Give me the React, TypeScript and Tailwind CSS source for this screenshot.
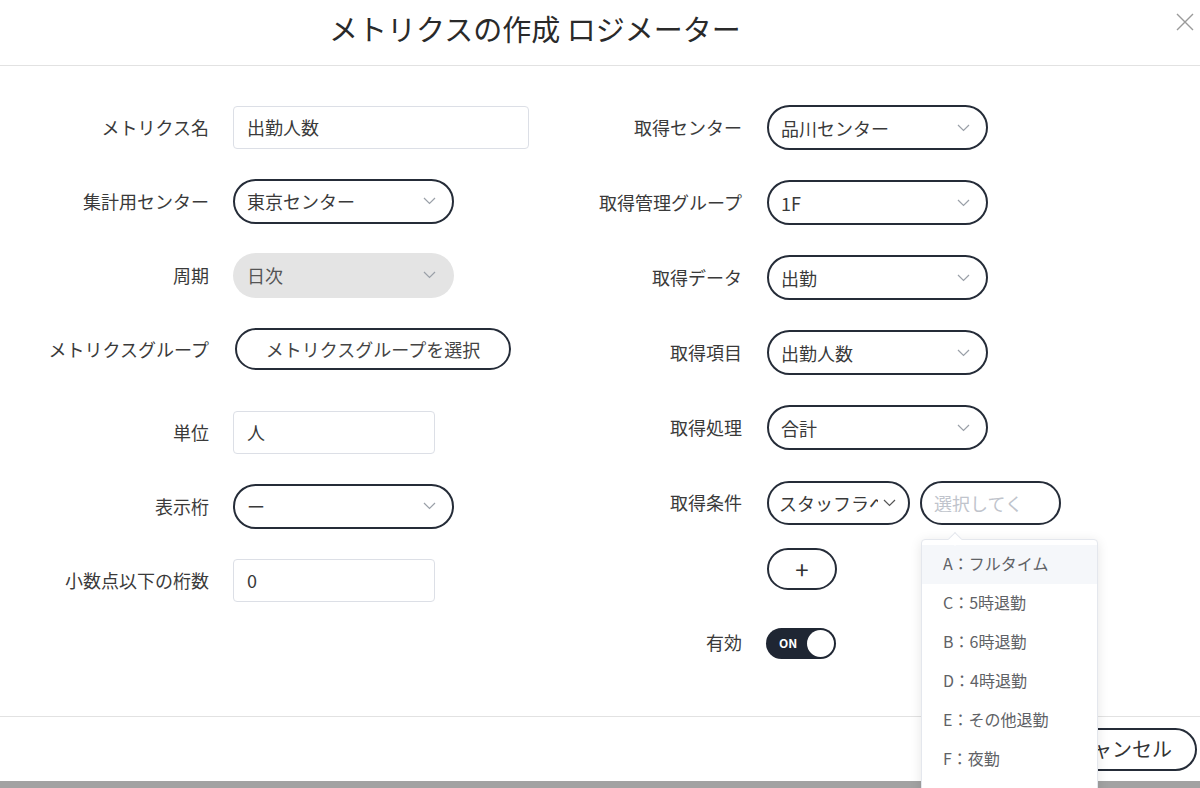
import React from "react";

const Chevron = ({ color = "#9aa0a8" }: { color?: string }) => (
  <svg width="13" height="8" viewBox="0 0 13 8" className="shrink-0">
    <polyline points="1,1 6.5,6.5 12,1" fill="none" stroke={color} strokeWidth="1.2" />
  </svg>
);

function Select({ value, width = "w-[221px]" }: { value: string; width?: string }) {
  return (
    <div
      className={`${width} h-[45px] rounded-full border-2 border-[#252c38] flex items-center pl-[12px] pr-[16px] bg-white`}
    >
      <span className="flex-1 text-[18px] text-[#3a3a3a] leading-none">{value}</span>
      <Chevron />
    </div>
  );
}

function TextInput({ value, width }: { value: string; width: string }) {
  return (
    <div
      className={`${width} h-[43px] rounded-[4px] border border-[#dcdfe6] flex items-center px-[13px] text-[18px] text-[#3a3a3a] leading-none`}
    >
      {value}
    </div>
  );
}

function LeftRow({
  label,
  children,
  extra = "",
}: {
  label: string;
  children: React.ReactNode;
  extra?: string;
}) {
  return (
    <div className={`h-[74px] flex items-center ${extra}`}>
      <div className="w-[209px] text-right text-[18px] text-[#3a3a3a] leading-none">{label}</div>
      <div className="ml-[24px]">{children}</div>
    </div>
  );
}

function RightRow({
  label,
  children,
  height = "h-[75px]",
}: {
  label: string;
  children: React.ReactNode;
  height?: string;
}) {
  return (
    <div className={`${height} flex items-center`}>
      <div className="w-[182px] text-right text-[18px] text-[#3a3a3a] leading-none -mt-[2px]">{label}</div>
      <div className="ml-[25px] flex items-center">{children}</div>
    </div>
  );
}

const options = [
  "A：フルタイム",
  "C：5時退勤",
  "B：6時退勤",
  "D：4時退勤",
  "E：その他退勤",
  "F：夜勤",
];

export default function App() {
  return (
    <div className="relative w-[1200px] h-[788px] overflow-hidden bg-white font-[family-name:'Noto_Sans_CJK_JP','Noto_Sans',sans-serif]">
      {/* header */}
      <div className="h-[66px] border-b border-[#e2e2e2] flex items-start">
        <h1 className="ml-[329px] mt-[10px] text-[29px] leading-[36px] text-[#2a2a2a] font-normal">
          メトリクスの作成 ロジメーター
        </h1>
        <button className="ml-auto mr-[6px] mt-[13px] w-[18px] h-[18px]" aria-label="close">
          <svg width="18" height="18" viewBox="0 0 18 18">
            <path d="M1 1 L17 17 M17 1 L1 17" stroke="#9a9a9a" strokeWidth="1.4" />
          </svg>
        </button>
      </div>

      {/* body */}
      <div className="h-[650px] flex">
        <div className="w-[560px] pt-[24px]">
          <LeftRow label="メトリクス名">
            <TextInput value="出勤人数" width="w-[296px]" />
          </LeftRow>
          <LeftRow label="集計用センター">
            <Select value="東京センター" />
          </LeftRow>
          <LeftRow label="周期">
            <div className="w-[221px] h-[45px] rounded-full bg-[#e4e4e4] flex items-center pl-[14px] pr-[18px]">
              <span className="flex-1 text-[18px] text-[#555] leading-none">日次</span>
              <Chevron />
            </div>
          </LeftRow>
          <LeftRow label="メトリクスグループ">
            <button className="ml-[2px] w-[276px] h-[42px] rounded-full border-2 border-[#252c38] text-[18px] text-[#444] leading-none">
              メトリクスグループを選択
            </button>
          </LeftRow>
          <LeftRow label="単位" extra="mt-[9px]">
            <TextInput value="人" width="w-[202px]" />
          </LeftRow>
          <LeftRow label="表示桁">
            <Select value="ー" />
          </LeftRow>
          <LeftRow label="小数点以下の桁数">
            <TextInput value="0" width="w-[202px]" />
          </LeftRow>
        </div>

        <div className="flex-1 pt-[24px]">
          <RightRow label="取得センター">
            <Select value="品川センター" width="w-[221px]" />
          </RightRow>
          <RightRow label="取得管理グループ">
            <Select value="1F" width="w-[221px]" />
          </RightRow>
          <RightRow label="取得データ">
            <Select value="出勤" width="w-[221px]" />
          </RightRow>
          <RightRow label="取得項目">
            <Select value="出勤人数" width="w-[221px]" />
          </RightRow>
          <RightRow label="取得処理">
            <Select value="合計" width="w-[221px]" />
          </RightRow>
          <RightRow label="取得条件">
            <div className="w-[143px] h-[44px] rounded-full border-2 border-[#252c38] flex items-center pl-[10px] pr-[12px]">
              <span className="w-[100px] overflow-hidden whitespace-nowrap text-[18px] text-[#3a3a3a] leading-none">
                スタッフラベル
              </span>
              <span className="ml-[5px]">
                <Chevron color="#555" />
              </span>
            </div>
            <div className="ml-[10px] w-[141px] h-[44px] rounded-full border-2 border-[#252c38] flex items-center pl-[12px] pr-[36px]">
              <span className="overflow-hidden whitespace-nowrap text-[18px] text-[#c0c4cc] leading-none">
                選択してください
              </span>
            </div>
          </RightRow>
          <RightRow label="" height="h-[58px]">
            <button className="w-[70px] h-[42px] rounded-full border-2 border-[#252c38] text-[24px] text-[#333] leading-none flex items-center justify-center">
              +
            </button>
          </RightRow>
          <RightRow label="有効" height="h-[90px]">
            <div className="-ml-[1px] w-[70px] h-[31px] rounded-full bg-[#1f2633] flex items-center pl-[13px] pr-[2px]">
              <span className="text-[12px] font-bold text-white leading-none">ON</span>
              <span className="ml-auto w-[27px] h-[27px] rounded-full bg-white" />
            </div>
          </RightRow>
        </div>
      </div>

      {/* footer */}
      <div className="h-[65px] border-t border-[#e2e2e2] flex items-center justify-end pr-[3px]">
        <button className="w-[150px] h-[43px] rounded-full border-2 border-[#252c38] text-[20px] text-[#333] leading-none">
          キャンセル
        </button>
      </div>
      <div className="h-[7px] bg-[#a2a2a2]" />

      {/* dropdown popper */}
      <div className="absolute left-[921px] top-[539px] w-[177px] h-[260px] bg-white border border-[#e4e7ed] rounded-[4px] shadow-[0_2px_12px_rgba(0,0,0,0.1)] pt-[5px]">
        <div className="absolute -top-[6px] left-[28px] w-[10px] h-[10px] bg-white border-l border-t border-[#e4e7ed] rotate-45" />
        {options.map((o, i) => (
          <div
            key={o}
            className={`h-[39px] flex items-center pl-[21px] text-[16px] text-[#606266] leading-none pb-[3px] ${
              i === 0 ? "bg-[#f5f7fa]" : ""
            }`}
          >
            {o}
          </div>
        ))}
      </div>
    </div>
  );
}
